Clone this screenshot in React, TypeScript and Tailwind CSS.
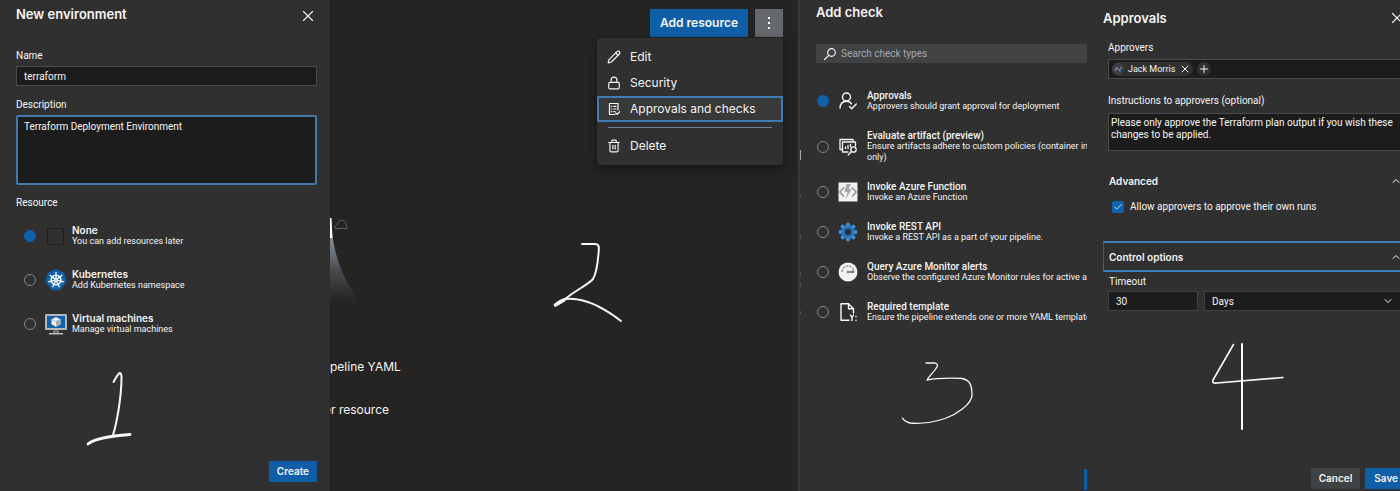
import React from "react";
import { X, Plus, Check, ChevronDown, ChevronUp, Lock, Pencil, Trash2 } from "lucide-react";

const strokeProps = {
  fill: "none",
  stroke: "#f8f8f8",
  strokeLinecap: "round" as const,
  strokeLinejoin: "round" as const,
};

function Radio({ name, id, checked }: { name: string; id: string; checked?: boolean }) {
  return (
    <input
      type="radio"
      id={id}
      name={name}
      defaultChecked={checked}
      className="h-3 w-3 shrink-0 appearance-none rounded-full border border-[#83878c] checked:border-[#0f62ab] checked:bg-[#0f62ab]"
    />
  );
}

/* ---------- icons ---------- */

function NoneIcon() {
  return (
    <svg viewBox="0 0 22 22" className="h-[22px] w-[22px] shrink-0" aria-hidden="true">
      <rect x="2.5" y="3.5" width="16" height="16" fill="none" stroke="#0c0c0c" strokeDasharray="1.5 1.5" />
    </svg>
  );
}

function KubernetesIcon() {
  const spokes = [0, 1, 2, 3, 4, 5, 6];
  return (
    <svg viewBox="0 0 22 22" className="h-[22px] w-[22px] shrink-0" aria-hidden="true">
      <path
        d="M11 .6 18.8 4.2 20.9 12.6 15.6 20Q15 20.8 14 20.8H8Q7 20.8 6.4 20L1.1 12.6 3.2 4.2Z"
        fill="#0f62ab"
        stroke="#0f62ab"
        strokeLinejoin="round"
      />
      <circle cx="11" cy="11" r="4.8" fill="none" stroke="#fff" strokeWidth="1.6" />
      {spokes.map((i) => (
        <path key={i} d="M11 9.6V3" stroke="#fff" strokeWidth="1.3" transform={`rotate(${(i * 360) / 7} 11 11)`} />
      ))}
      <circle cx="11" cy="11" r="1.9" fill="#fff" />
      <circle cx="11" cy="11" r=".6" fill="#0f62ab" />
    </svg>
  );
}

function VmIcon() {
  return (
    <svg viewBox="0 0 22 22" className="h-[22px] w-[22px] shrink-0" aria-hidden="true">
      <rect x="0" y="1" width="22" height="16" rx="1" fill="#b4b8bb" />
      <rect x="2" y="3" width="18" height="12" fill="#0f62ab" />
      <path d="M11 4 15.5 6.2V11.2L11 14 6.5 11.2V6.2Z" fill="#f0f0f0" />
      <path d="M11 8.6 15.5 6.2V11.2L11 14Z" fill="#a9adb0" />
      <path d="M6.5 6.2 11 8.6 15.5 6.2" fill="none" stroke="#7db0dc" strokeWidth=".7" />
      <path d="M8.5 17h5l.8 3H7.7Z" fill="#6f7377" />
      <rect x="4" y="20" width="14" height="1.4" fill="#c6c9cb" />
    </svg>
  );
}

function ApprovalsIcon() {
  return (
    <svg viewBox="0 0 20 20" className="h-5 w-5 shrink-0" aria-hidden="true" {...strokeProps} strokeWidth="1.4">
      <circle cx="8.5" cy="6" r="4" />
      <path d="M2 17c.3-4 2.8-6.800 6.500-6.800 2.200 0 4 1 5 2.600" />
      <path d="m11.5 15.500 2.200 2.200 4.600-4.600" />
    </svg>
  );
}

function ArtifactIcon() {
  return (
    <svg viewBox="0 0 20 20" className="h-5 w-5 shrink-0" aria-hidden="true" {...strokeProps} strokeWidth="1.3">
      <path d="M4 12.500H2V2.500H15V4.500" />
      <path d="M10 15H4.500V5H17.500V9" />
      <path d="M7.500 11.500V10M10 11.500V8.500M12.500 9.500V7.500" />
      <circle cx="15.500" cy="12.500" r="2.700" />
      <path d="m13.500 14.500-3.300 3.500" />
    </svg>
  );
}

function FunctionIcon() {
  return (
    <svg viewBox="0 0 20 20" className="h-5 w-5 shrink-0" aria-hidden="true">
      <rect width="19" height="19" x=".5" y=".5" fill="#f1f1f1" />
      <path d="M6 5.500 1.800 10 6 14.500M14 5.500l4.200 4.500-4.200 4.500" fill="none" stroke="#8d9093" strokeWidth="1.4" />
      <path d="M8.500 2h4.500l-2.300 5h3L7.800 17l1.700-7H6.300Z" fill="#a5a8aa" />
    </svg>
  );
}

function GearIcon() {
  const teeth = [0, 45, 90, 135, 180, 225, 270, 315];
  return (
    <svg viewBox="0 0 20 20" className="h-5 w-5 shrink-0" aria-hidden="true">
      <circle cx="10" cy="10" r="5" fill="none" stroke="#1a6cb5" strokeWidth="4" />
      {teeth.map((a) => (
        <path key={a} d="M7.800 4 8.500.7h3L12.200 4Z" fill="#3f8fd4" transform={`rotate(${a} 10 10)`} />
      ))}
      <circle cx="10" cy="10" r="5" fill="none" stroke="#6aa9de" strokeDasharray="1 2" />
    </svg>
  );
}

function MonitorIcon() {
  return (
    <svg viewBox="0 0 20 20" className="h-5 w-5 shrink-0" aria-hidden="true">
      <circle cx="10" cy="10" r="9.5" fill="#f1f1f1" />
      <path d="M4 10a6 6 0 0 1 12 0" fill="none" stroke="#9a9da0" strokeWidth="1.6" strokeDasharray="2.5 1" />
      <path d="M9 9.200 16 8.500V11H10Z" fill="#7c8084" />
      <circle cx="10" cy="10" r="1.5" fill="#8d9093" />
    </svg>
  );
}

function TemplateIcon() {
  return (
    <svg viewBox="0 0 20 20" className="h-5 w-5 shrink-0" aria-hidden="true" {...strokeProps} strokeWidth="1.4">
      <path d="M11 18.300H3V1.700H10.500L15.500 6.700V11" />
      <path d="M10.500 1.700V6.700H15.500" />
      <path d="m12.500 13 1.500 2.500L15.500 13M14 15.500V18.500M18 14.500v.3M18 18.300v.2" />
    </svg>
  );
}

function ChecklistIcon() {
  return (
    <svg viewBox="0 0 14 14" className="h-3.5 w-3.5" aria-hidden="true" {...strokeProps} strokeWidth="1.2">
      <path d="M8 12.500H2.500V1.500H11V8" />
      <path d="M4.500 4.300h.4M6.800 4.300H9M4.500 7h.4M6.800 7H9M4.500 9.700h.4M6.800 9.700H8" />
      <path d="m8.800 11 1.400 1.400 2.600-2.700" />
    </svg>
  );
}

function TrashIcon() {
  return <Trash2 className="h-3.5 w-3.5" strokeWidth={2} />;
}

/* ---------- panels ---------- */

const resources = [
  { id: "none", title: "None", text: "You can add resources later", icon: <NoneIcon /> },
  { id: "k8s", title: "Kubernetes", text: "Add Kubernetes namespace", icon: <KubernetesIcon /> },
  { id: "vm", title: "Virtual machines", text: "Manage virtual machines", icon: <VmIcon /> },
];

function NewEnvironment() {
  return (
    <section className="relative flex flex-col overflow-hidden bg-[#303030] pr-[13px] pb-[9px] pl-4 font-['Roboto',sans-serif]">
      <header className="flex h-8 items-center justify-between">
        <h2 className="pb-1 font-['Inter',sans-serif] text-[13px] leading-4 font-semibold">New environment</h2>
        <button type="button" aria-label="Close">
          <X className="h-[18px] w-[18px]" strokeWidth={1.5} />
        </button>
      </header>

      <label htmlFor="env-name" className="mt-[18px] text-[10px] leading-3">
        Name
      </label>
      <input
        id="env-name"
        defaultValue="terraform"
        className="mt-1 h-5 border border-[#4a4a4a] bg-[#1c1c1c] px-[7px] text-[10px] outline-none"
      />

      <label htmlFor="env-desc" className="mt-[13px] text-[10px] leading-3">
        Description
      </label>
      <textarea
        id="env-desc"
        defaultValue="Terraform Deployment Environment"
        className="mt-1 h-[70px] resize-none rounded-[2px] border-2 border-[#4279aa] bg-[#1c1c1c] px-1.5 py-1 text-[10px] leading-3 outline-none"
      />

      <fieldset className="mt-3 flex flex-col">
        <legend className="text-[10px] leading-3">Resource</legend>
        <div className="mt-4 flex flex-col gap-[22px] pl-2">
          {resources.map((r, i) => (
            <label key={r.id} htmlFor={r.id} className="flex items-center">
              <Radio name="resource" id={r.id} checked={i === 0} />
              <span className="mr-[5px] ml-[9px]">{r.icon}</span>
              <span className="flex flex-col">
                <span className="font-['Inter',sans-serif] text-[10px] leading-[11px] font-semibold">{r.title}</span>
                <span className="text-[9px] leading-[11px]">{r.text}</span>
              </span>
            </label>
          ))}
        </div>
      </fieldset>

      <button
        type="button"
        className="mt-auto h-[21px] self-end bg-[#0f5fa8] px-2 font-['Inter',sans-serif] text-[10px] font-semibold"
      >
        Create
      </button>

      <svg viewBox="0 0 60 80" className="absolute top-[368px] left-[80px] h-20 w-[60px]" aria-hidden="true" {...strokeProps}>
        <path d="M33.500 14C35 11 37.500 7 39.500 5c1.500-.5 2 2 2 4C41.500 30 36.500 56 33 67" strokeWidth="2" />
        <path d="M8 76C14 71 30 68 50 66.500" strokeWidth="2.8" />
      </svg>
    </section>
  );
}

function EnvironmentPage() {
  const item = "flex h-[26px] items-center gap-[9px] px-[10px] text-left";
  return (
    <section className="relative flex flex-col overflow-hidden bg-[#252422] pt-[9px]">
      <div className="flex justify-end gap-[7px] pr-[15px]">
        <button type="button" className="h-7 bg-[#0f5fa8] px-[10px] text-[12px] font-semibold">
          Add resource
        </button>
        <button type="button" aria-label="More actions" className="flex h-7 w-7 items-center justify-center bg-[#65686c]">
          <svg viewBox="0 0 4 14" className="h-3.5 w-1" fill="#fff" aria-hidden="true">
            <rect x="1" y="1" width="2" height="2" />
            <rect x="1" y="6" width="2" height="2" />
            <rect x="1" y="11" width="2" height="2" />
          </svg>
        </button>
      </div>

      <div
        role="menu"
        className="mt-px mr-[15px] flex w-[186px] flex-col self-end rounded-[3px] bg-[#303030] py-1.5 text-[12px] shadow-[0_3px_10px_rgba(0,0,0,0.5)]"
      >
        <button type="button" role="menuitem" className={item}>
          <Pencil className="h-3.5 w-3.5" strokeWidth={2} />
          Edit
        </button>
        <button type="button" role="menuitem" className={item}>
          <Lock className="h-3.5 w-3.5" strokeWidth={2} />
          Security
        </button>
        <button
          type="button"
          role="menuitem"
          className="flex h-[26px] items-center gap-[9px] border-2 border-[#3f7cb4] bg-[#383838] px-2 text-left"
        >
          <ChecklistIcon />
          Approvals and checks
        </button>
        <hr className="mx-[11px] my-[5px] border-[#6c7f96]" />
        <button type="button" role="menuitem" className={item}>
          <TrashIcon />
          Delete
        </button>
      </div>

      <div className="mt-[194px] flex flex-col gap-[27px] text-[12px] leading-4">
        <p>peline YAML</p>
        <p className="flex w-[59px] justify-end whitespace-nowrap">er resource</p>
      </div>

      <svg viewBox="0 0 40 100" className="absolute top-[214px] left-0 h-[100px] w-10" aria-hidden="true">
        <defs>
          <linearGradient id="glow" x1="0" y1="0" x2="0" y2="1">
            <stop offset="0" stopColor="#8b939c" />
            <stop offset=".55" stopColor="#45484b" />
            <stop offset="1" stopColor="#252422" />
          </linearGradient>
        </defs>
        <path d="M0 22H2.500C5 40 10 54 16 66L22 76 26 88H0Z" fill="url(#glow)" />
        <path d="M0 4H1.500L2.500 24H0Z" fill="#fff" />
        <path d="M5 14.500C4.500 12 6.500 10.500 7.500 10.500 8 5 15.500 5 16 10L17 14.500Z" fill="none" stroke="#5b5e61" />
      </svg>

      <svg viewBox="0 0 80 90" className="absolute top-[238px] left-[220px] h-[90px] w-20" aria-hidden="true" {...strokeProps}>
        <path d="M32 6H45C48.500 6 49 8 48.800 12 48 24 46 36 43 41 38 47 24 53 14 62" strokeWidth="2" />
        <path d="M5.500 67C10 60 20 60 28 61.500 44 64 58 73 71 83" strokeWidth="2" />
        <path d="M5.500 67 14 62" strokeWidth="3.5" />
      </svg>
    </section>
  );
}

const checks = [
  { id: "approvals", title: "Approvals", text: ["Approvers should grant approval for deployment"], icon: <ApprovalsIcon /> },
  {
    id: "artifact",
    title: "Evaluate artifact (preview)",
    text: ["Ensure artifacts adhere to custom policies (container images", "only)"],
    icon: <ArtifactIcon />,
  },
  { id: "function", title: "Invoke Azure Function", text: ["Invoke an Azure Function"], icon: <FunctionIcon /> },
  { id: "rest", title: "Invoke REST API", text: ["Invoke a REST API as a part of your pipeline."], icon: <GearIcon /> },
  {
    id: "monitor",
    title: "Query Azure Monitor alerts",
    text: ["Observe the configured Azure Monitor rules for active alerts"],
    icon: <MonitorIcon />,
  },
  {
    id: "template",
    title: "Required template",
    text: ["Ensure the pipeline extends one or more YAML templates"],
    icon: <TemplateIcon />,
  },
];

function AddCheck() {
  return (
    <section className="relative flex flex-col overflow-hidden border-l-2 border-[#3a3a3a] bg-[#303030] pt-1 pb-px pl-4 font-['Roboto',sans-serif]">
      <h2 className="font-['Inter',sans-serif] text-[13px] leading-4 font-semibold">Add check</h2>

      <div className="mt-6 flex h-[19px] items-center gap-1 bg-[#414244] pl-[7px]">
        <svg viewBox="0 0 14 14" className="h-3.5 w-3.5" aria-hidden="true" {...strokeProps} strokeWidth="1.2">
          <circle cx="8.5" cy="5.5" r="3.8" />
          <path d="M5.700 8.300 1.500 12.500" />
        </svg>
        <input
          type="search"
          aria-label="Search check types"
          placeholder="Search check types"
          className="min-w-0 flex-1 bg-transparent text-[10px] outline-none placeholder:text-[#a4a8ac]"
        />
      </div>

      <div className="mt-[27px] flex flex-col gap-[18px] pl-px">
        {checks.map((c, i) => (
          <label key={c.id} htmlFor={c.id} className="flex items-center whitespace-nowrap">
            <Radio name="check" id={c.id} checked={i === 0} />
            <span className="mr-[9px] ml-[9px]">{c.icon}</span>
            <span className="flex flex-col">
              <span className="text-[10px] leading-[11px] font-medium">{c.title}</span>
              {c.text.map((line) => (
                <span key={line} className="text-[9px] leading-[11px]">
                  {line}
                </span>
              ))}
            </span>
          </label>
        ))}
      </div>

      <div className="mt-auto h-[21px] w-[3px] self-end bg-[#0f5fa8]" />

      <svg viewBox="0 0 3 190" className="absolute top-[145px] left-[-2px] h-[190px] w-[3px]" aria-hidden="true">
        <rect x="1" y="5" width="2" height="10" fill="#a3a7ab" />
        <path
          d="M1 46v5M2 49v3M1 59v5M2 90v4M1 92v5M1 101v5M2 127v5M1 130v4M2 138v4M1 164v4M2 166v3M1 176v5"
          stroke="#6d7074"
        />
      </svg>

      <svg viewBox="0 0 90 70" className="absolute top-[356px] left-[95px] h-[70px] w-[90px]" aria-hidden="true" {...strokeProps} strokeWidth="1.3">
        <path d="M31 7H40C43 8 43 10 41 12.500 38 17 34 20 32 24 44 21.500 54 22 67 22.500 75 24 77 29 77 39 77 48 62 58 50 62.500 36 67 24 68 15 67 11 66 9 65 7.500 62" />
      </svg>
    </section>
  );
}

function Approvals() {
  return (
    <section className="relative flex flex-col overflow-hidden bg-[#303030] pb-0.5 pl-4 font-['Roboto',sans-serif]">
      <header className="flex h-9 items-center justify-between">
        <h2 className="font-['Inter',sans-serif] text-[13px] leading-4 font-semibold">Approvals</h2>
        <button type="button" aria-label="Close" className="-mr-1.5">
          <X className="h-[18px] w-[18px]" strokeWidth={1.5} />
        </button>
      </header>

      <div className="flex flex-col pl-[5px] text-[10px] leading-3">
        <span className="mt-1.5">Approvers</span>
        <div className="mt-[5px] flex h-5 items-center gap-1 border border-r-0 border-[#4a4a4a] bg-[#1c1c1c] pl-[3px]">
          <span className="flex h-3.5 items-center gap-1 rounded-full bg-[#303030] pr-0.5 text-[9px]">
            <svg viewBox="0 0 12 12" className="h-3 w-3" aria-hidden="true">
              <circle cx="6" cy="6" r="6" fill="#3c3e41" />
              <path d="M3 8 4.500 4.500 7 7.500 9.500 4" fill="none" stroke="#9aa7b4" />
              <circle cx="8" cy="8" r="1.2" fill="#1a72c4" />
            </svg>
            Jack Morris
            <button type="button" aria-label="Remove Jack Morris">
              <X className="h-3 w-3" strokeWidth={2} />
            </button>
          </span>
          <button type="button" aria-label="Add approver" className="rounded-full bg-[#303030] p-px">
            <Plus className="h-3 w-3" strokeWidth={2} />
          </button>
        </div>

        <label htmlFor="instructions" className="mt-4">
          Instructions to approvers (optional)
        </label>
        <textarea
          id="instructions"
          defaultValue={"Please only approve the Terraform plan output if you wish these\nchanges to be applied."}
          className="mt-1.5 h-[38px] resize-none overflow-hidden border border-r-0 border-[#4a4a4a] bg-[#1c1c1c] px-0.5 py-[3px] whitespace-pre outline-none"
        />
      </div>

      <button
        type="button"
        className="mt-6 flex h-3 items-center justify-between pl-1.5 font-['Inter',sans-serif] text-[10px] leading-3 font-semibold"
      >
        Advanced
        <ChevronUp className="-mr-0.5 h-3 w-3" />
      </button>
      <label htmlFor="own-runs" className="mt-3.5 flex items-center gap-1.5 pl-[9px] text-[10px] leading-3">
        <span className="relative flex h-3 w-3 items-center justify-center">
          <input
            id="own-runs"
            type="checkbox"
            defaultChecked
            className="h-3 w-3 appearance-none rounded-[2px] border border-[#0f62ab] checked:bg-[#0f62ab]"
          />
          <Check className="pointer-events-none absolute h-2.5 w-2.5" strokeWidth={2} />
        </span>
        Allow approvers to approve their own runs
      </label>

      <button
        type="button"
        className="mt-7 flex h-[31px] items-center justify-between border-y-2 border-l border-y-[#3f7fba] border-l-[#55595e] pl-[5px] font-['Inter',sans-serif] text-[10px] leading-3 font-semibold"
      >
        Control options
        <ChevronUp className="-mr-0.5 h-3 w-3" />
      </button>

      <label htmlFor="timeout" className="mt-1 pl-1.5 text-[10px] leading-3">
        Timeout
      </label>
      <div className="mt-[3px] flex gap-1.5 pl-[5px] text-[10px]">
        <input
          id="timeout"
          defaultValue="30"
          className="h-5 w-[90px] border border-[#414141] bg-[#1c1c1c] px-[7px] leading-3 outline-none"
        />
        <div className="relative flex flex-1 items-center">
          <select
            aria-label="Timeout unit"
            className="h-5 w-full appearance-none border border-r-0 border-[#414141] bg-[#1c1c1c] px-[7px] outline-none"
          >
            <option>Days</option>
            <option>Hours</option>
            <option>Minutes</option>
          </select>
          <ChevronDown className="pointer-events-none absolute right-1.5 h-3 w-3" />
        </div>
      </div>

      <footer className="mt-auto flex justify-end gap-[5px] font-['Inter',sans-serif] text-[10px] font-semibold">
        <button type="button" className="h-[21px] bg-[#414244] px-2">
          Cancel
        </button>
        <button type="button" className="h-[21px] bg-[#0f5fa8] pr-0.5 pl-[9px]">
          Save
        </button>
      </footer>

      <svg viewBox="0 0 90 90" className="absolute top-[342px] left-[113px] h-[90px] w-[90px]" aria-hidden="true" {...strokeProps} strokeWidth="1.6">
        <path d="M33.500 2.500 13 38C12 41 14 41.500 17 41L83 35.500" />
        <path d="M42 2V87" strokeWidth="2" />
      </svg>
    </section>
  );
}

export default function App() {
  return (
    <main className="grid min-h-screen grid-cols-[330px_minmax(0,1fr)_289px_313px] bg-[#252422] font-['Inter',sans-serif] text-[#f5f5f5]">
      <NewEnvironment />
      <EnvironmentPage />
      <AddCheck />
      <Approvals />
    </main>
  );
}
